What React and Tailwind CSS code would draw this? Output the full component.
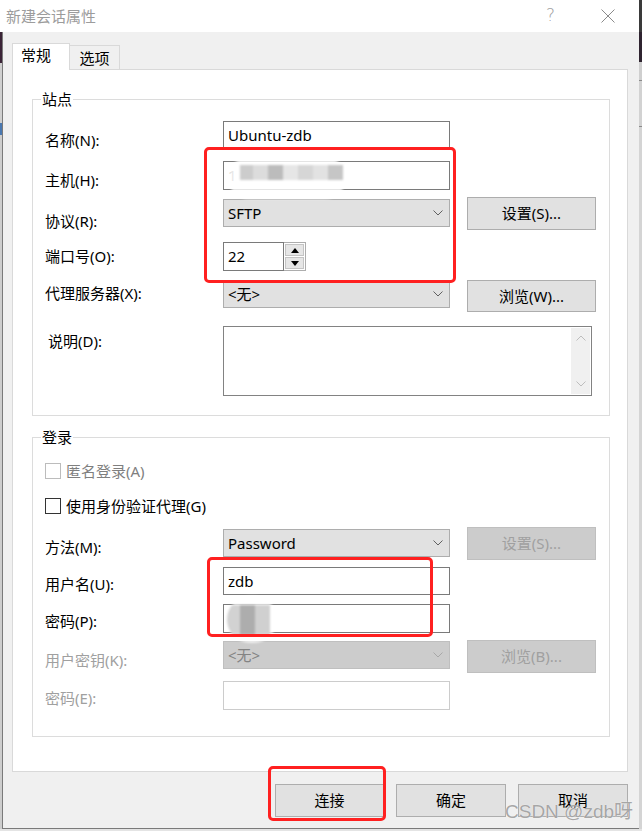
import React from "react";

const Chevron = ({ color = "#606060" }) => (
  <svg width="10" height="6" viewBox="0 0 10 6" fill="none">
    <path d="M0.5 0.5 L5 5 L9.5 0.5" stroke={color} strokeWidth="1" />
  </svg>
);

const Input = ({ children, w = "w-[227px]", h = "h-[28px]", disabled }) => (
  <div
    className={`${w} ${h} shrink-0 bg-white border ${disabled ? "border-[#cccccc]" : "border-[#7a7a7a]"} flex items-center pl-[4px] text-black`}
  >
    {children}
  </div>
);

const Select = ({ children, disabled, mt = "" }) => (
  <div
    className={`${mt} w-[227px] h-[28px] shrink-0 border flex items-center justify-between pl-[4px] pr-[6px] ${
      disabled ? "bg-[#cccccc] border-[#bfbfbf] text-[#838383]" : "bg-[#e1e1e1] border-[#adadad] text-black"
    }`}
  >
    <span>{children}</span>
    <Chevron color={disabled ? "#a8a8a8" : "#606060"} />
  </div>
);

const Btn = ({ children, disabled, h = "h-[33px]" }) => (
  <div
    className={`ml-[17px] w-[129px] ${h} shrink-0 border flex items-center justify-center ${
      disabled ? "bg-[#cccccc] border-[#bfbfbf] text-[#a0a0a0]" : "bg-[#e1e1e1] border-[#adadad] text-black"
    }`}
  >
    {children}
  </div>
);

const Label = ({ children, mt, disabled, extra = "" }) => (
  <div className={`w-[178px] shrink-0 leading-[20px] ${mt} ${disabled ? "text-[#a0a0a0]" : "text-black"}`}>
    <span className={extra}>{children}</span>
  </div>
);

const Group = ({ title, className, children }) => (
  <div className={`relative border border-[#dcdcdc] pl-[12px] ${className}`}>
    <span className="absolute -top-[11px] left-[8px] bg-white px-[1px] leading-[20px] text-black">{title}</span>
    {children}
  </div>
);

const Checkbox = ({ disabled }) => (
  <div
    className={`w-[16px] h-[16px] shrink-0 bg-white border ${disabled ? "border-[#bcbcbc]" : "border-[#333333]"}`}
  />
);

const Tri = ({ up }) => (
  <svg width="8" height="5" viewBox="0 0 8 5">
    {up ? <path d="M0 5 L4 0 L8 5 Z" fill="#000" /> : <path d="M0 0 L8 0 L4 5 Z" fill="#000" />}
  </svg>
);

export default function App() {
  return (
    <div className="relative w-[642px] h-[831px] overflow-hidden bg-[#e4e4e4] font-['Noto_Sans','Noto_Sans_CJK_SC',sans-serif] text-[15px] flex flex-col">
      {/* title bar */}
      <div className="h-[32px] shrink-0 flex">
        <div className="flex-1 bg-white flex items-center pl-[6px] text-[#9c9c9c] text-[15px]">
          <span>新建会话属性</span>
          <span className="ml-auto mr-[46px] text-[17px] text-[#a0a0a0] font-['DejaVu_Sans',sans-serif] font-light">?</span>
          <svg width="14" height="14" viewBox="0 0 14 14" className="mr-[24px]">
            <path d="M0.5 0.5 L13.5 13.5 M13.5 0.5 L0.5 13.5" stroke="#8a8a8a" strokeWidth="1" />
          </svg>
        </div>
        <div className="w-[3px] bg-[#3a3a3a]" />
      </div>

      <div className="flex h-[797px] shrink-0">
        {/* left strip */}
        <div className="w-[2px] flex flex-col">
          <div className="h-[31px] bg-[#3b2437]" />
          <div className="h-[60px] bg-[#cfcfcf]" />
          <div className="h-[12px] bg-[#4a78b0]" />
          <div className="flex-1 bg-[#cdcdcd]" />
        </div>

        {/* dialog body */}
        <div className="flex-1 bg-[#f0f0f0] border-l border-b border-[#7a7a7a] pl-[9px] pr-[11px] pt-[11px] flex flex-col">
          {/* tabs */}
          <div className="h-[26px] flex items-end">
            <div className="relative z-10 -mb-px h-[27px] w-[58px] bg-white border border-b-0 border-[#d9d9d9] pl-[8px] leading-[22px] text-black">
              常规
            </div>
            <div className="h-[24px] w-[50px] border border-l-0 border-b-0 border-[#d9d9d9] flex items-center justify-center pt-[1px] text-black">
              选项
            </div>
          </div>

          {/* panel */}
          <div className="h-[703px] bg-white border border-[#d9d9d9] pl-[19px] pr-[17px] pt-[29px] flex flex-col">
            <Group title="站点" className="h-[317px] pt-[21px]">
              <div className="flex h-[40px]">
                <Label mt="mt-[9px]">名称(N):</Label>
                <Input>Ubuntu-zdb</Input>
              </div>
              <div className="flex h-[36px]">
                <Label mt="mt-[9px]">主机(H):</Label>
                <Input h="h-[29px]">
                  <span className="text-[#888]">1</span>
                </Input>
              </div>
              <div className="flex h-[45px]">
                <Label mt="mt-[14px]">协议(R):</Label>
                <Select mt="mt-[2px]">SFTP</Select>
                <Btn>设置(S)...</Btn>
              </div>
              <div className="flex h-[38px]">
                <Label mt="mt-[4px]">端口号(O):</Label>
                <div className="flex h-[29px]">
                  <Input w="w-[61px]" h="h-[29px]">22</Input>
                  <div className="w-[22px] h-[29px] border border-l-0 border-[#adadad] bg-white p-[1px] flex flex-col gap-[1px]">
                    <div className="flex-1 bg-[#e6e6e6] border border-[#c4c4c4] flex items-center justify-center">
                      <Tri up />
                    </div>
                    <div className="flex-1 bg-[#e6e6e6] border border-[#c4c4c4] flex items-center justify-center">
                      <Tri />
                    </div>
                  </div>
                </div>
              </div>
              <div className="flex h-[46px]">
                <Label mt="mt-[3px]">代理服务器(X):</Label>
                <Select>&lt;无&gt;</Select>
                <Btn h="h-[32px]">浏览(W)...</Btn>
              </div>
              <div className="flex h-[70px]">
                <Label mt="mt-[5px]" extra="ml-[3px]">说明(D):</Label>
                <div className="w-[369px] h-[70px] border border-[#828282] bg-white flex justify-end p-[1px]">
                  <div className="w-[19px] h-full bg-[#f0f0f0] flex flex-col items-center justify-between py-[7px]">
                    <svg width="10" height="6" viewBox="0 0 10 6" fill="none">
                      <path d="M0.5 5.5 L5 1 L9.5 5.5" stroke="#bdbdbd" strokeWidth="1" />
                    </svg>
                    <Chevron color="#bdbdbd" />
                  </div>
                </div>
              </div>
            </Group>

            <Group title="登录" className="mt-[21px] h-[300px] pt-[23px]">
              <div className="flex items-center h-[20px] gap-[5px] text-[#7f7f7f]">
                <Checkbox disabled />
                <span>匿名登录(A)</span>
              </div>
              <div className="mt-[15px] flex items-center h-[20px] gap-[5px] text-black">
                <Checkbox />
                <span>使用身份验证代理(G)</span>
              </div>
              <div className="mt-[11px] flex h-[40px]">
                <Label mt="mt-[10px]">方法(M):</Label>
                <Select mt="mt-[2px]">Password</Select>
                <Btn disabled>设置(S)...</Btn>
              </div>
              <div className="flex h-[37px]">
                <Label mt="mt-[7px]">用户名(U):</Label>
                <Input>zdb</Input>
              </div>
              <div className="flex h-[36px]">
                <Label mt="mt-[7px]">密码(P):</Label>
                <Input h="h-[29px]" />
              </div>
              <div className="flex h-[41px]">
                <Label mt="mt-[10px]" disabled>用户密钥(K):</Label>
                <Select mt="mt-[1px]" disabled>&lt;无&gt;</Select>
                <Btn disabled>浏览(B)...</Btn>
              </div>
              <div className="flex h-[29px]">
                <Label mt="mt-[7px]" disabled>密码(E):</Label>
                <Input h="h-[29px]" disabled />
              </div>
            </Group>
          </div>

          {/* bottom buttons */}
          <div className="mt-[12px] flex justify-end gap-[12px]">
            <div className="w-[109px] h-[33px] bg-[#e1e1e1] border border-[#adadad] flex items-center justify-center text-black">连接</div>
            <div className="w-[110px] h-[33px] bg-[#e1e1e1] border border-[#adadad] flex items-center justify-center text-black">确定</div>
            <div className="w-[110px] h-[33px] bg-[#e1e1e1] border border-[#adadad] flex items-center justify-center text-black">取消</div>
          </div>
        </div>

        {/* right strip */}
        <div className="w-[3px] flex flex-col">
          <div className="h-[30px] bg-[#2f2430]" />
          <div className="h-[18px] bg-[#cfcfcf]" />
          <div className="h-[1px] bg-[#8a8a8a]" />
          <div className="h-[45px] bg-[#d2d2d2]" />
          <div className="h-[1px] bg-[#8a8a8a]" />
          <div className="flex-1 bg-[#d4d4d4]" />
        </div>
      </div>

      {/* mosaic blur on host field */}
      <div className="absolute left-[228px] top-[157px] w-[118px] h-[42px] rounded-full bg-white/80 blur-[1px] flex items-start pt-[8px] pl-[12px]">
        <div className="w-[13px] h-[15px] bg-[#cccccc]" />
        <div className="w-[15px] h-[15px] bg-[#dcdcdc]" />
        <div className="w-[15px] h-[15px] bg-[#bcbcbc]" />
        <div className="w-[15px] h-[15px] bg-[#e6e6e6]" />
        <div className="w-[15px] h-[15px] bg-[#d6d6d6]" />
        <div className="w-[15px] h-[15px] bg-[#e2e2e2]" />
        <div className="w-[15px] h-[15px] bg-[#c6c6c6]" />
      </div>
      {/* mosaic blur on password field */}
      <div className="absolute left-[227px] top-[596px] w-[50px] h-[47px] rounded-full bg-white/70 blur-[1px] flex items-center overflow-hidden">
        <div className="w-[13px] h-[30px] bg-[#d2d2d2]" />
        <div className="w-[15px] h-[30px] bg-[#adadad]" />
        <div className="w-[15px] h-[30px] bg-[#d0d0d0]" />
      </div>

      {/* red annotations */}
      <div className="absolute left-[204px] top-[147px] w-[252px] h-[136px] border-[3px] border-[#ff2020] rounded-[5px]" />
      <div className="absolute left-[207px] top-[557px] w-[226px] h-[80px] border-[3px] border-[#ff2020] rounded-[5px]" />
      <div className="absolute left-[268px] top-[766px] w-[118px] h-[55px] border-[3px] border-[#ff2020] rounded-[5px]" />

      {/* watermark */}
      <div className="absolute left-[505px] top-[799px] text-[19px] leading-[26px] text-[#8f8f8f]/80 font-['Liberation_Sans','Noto_Sans_CJK_SC',sans-serif] [text-shadow:0_0_1px_#fff]">
        CSDN @zdb呀
      </div>
    </div>
  );
}
